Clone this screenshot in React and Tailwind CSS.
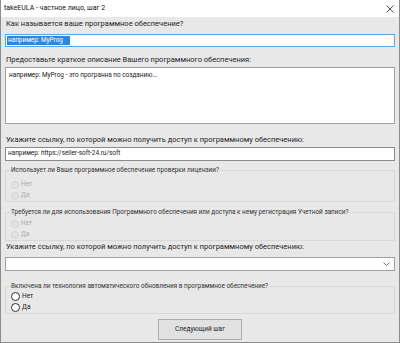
import React from "react";

const F = { fontFamily: 'Roboto, "Liberation Sans", Arial, sans-serif' };

function Radio({ label, disabled }) {
  return (
    <div className="flex items-center h-[11px] gap-[2px] leading-[11px]">
      <span
        className={
          disabled
            ? "w-[8px] h-[8px] rounded-full bg-[#e2e2e2] border border-[#d4d4d4]"
            : "w-[9px] h-[9px] rounded-full bg-white border border-[#333]"
        }
      />
      <span className={disabled ? "text-[6.5px] text-[#a8a8a8]" : "text-[6.5px] text-[#222]"}>{label}</span>
    </div>
  );
}

function Group({ legend, disabled, className }) {
  return (
    <fieldset className={"border border-[#d8d8d8] mx-[4px] px-[5px] " + className}>
      <legend className="text-[6.4px] text-[#333] leading-[10px] px-0">{legend}</legend>
      <div className="flex flex-col">
        <Radio label="Нет" disabled={disabled} />
        <Radio label="Да" disabled={disabled} />
      </div>
    </fieldset>
  );
}

export default function App() {
  return (
    <div style={F} className="w-[400px] h-[343px] bg-[#e8e8e8] border-x border-b border-[#8c8c8c] flex flex-col text-[#1e1e1e]">
      <div className="h-[17px] shrink-0 bg-white flex items-center justify-between pl-[3px] pr-[5px]">
        <span className="text-[7px] text-[#111]">takeEULA - частное лицо, шаг 2</span>
        <svg width="8" height="8" viewBox="0 0 8 8" className="mt-[1px]">
          <path d="M0.5 0.5 L7.5 7.5 M7.5 0.5 L0.5 7.5" stroke="#555" strokeWidth="1" />
        </svg>
      </div>

      <div className="mt-[1px] px-[5px] h-[12px] shrink-0 leading-[12px] text-[7.5px]">Как называется ваше программное обеспечение?</div>
      <div className="mt-[4px] mx-[4px] h-[13px] shrink-0 bg-white border border-[#56a6e8] flex items-center px-[1px]">
        <span className="bg-[#2f86dd] text-white text-[6.4px] leading-[9px] pl-[1px] pr-[7px]">например: MyProg</span>
      </div>

      <div className="mt-[7px] px-[5px] h-[12px] shrink-0 leading-[12px] text-[7.5px]">Предоставьте краткое описание Вашего программного обеспечения:</div>
      <div className="mt-[1px] mx-[4px] h-[57px] shrink-0 bg-white border border-[#a0a0a0] px-[3px] pt-[2px] text-[6.4px] leading-[10px] text-[#222]">
        например: MyProg - это програнна по созданию...
      </div>

      <div className="mt-[10px] px-[5px] h-[12px] shrink-0 leading-[12px] text-[7.5px]">Укажите ссылку, по которой можно получить доступ к программному обеспечению:</div>
      <div className="mt-[1px] mx-[4px] h-[14px] shrink-0 bg-white border border-[#8a8a8a] flex items-center px-[2px]">
        <span className="text-[6.4px] text-[#222]">например: https://seller-soft-24.ru/soft</span>
      </div>

      <Group legend="Использует ли Ваше программное обеспечение проверки лицензии?" disabled className="mt-[4px] pt-[4px] shrink-0" />
      <Group legend="Требуется ли для использования Программного обеспечения или доступа к нему регистрация Учетной записи?" disabled className="mt-[5px] pt-[1px] shrink-0" />

      <div className="mt-0 px-[5px] h-[12px] shrink-0 leading-[12px] text-[7.5px]">Укажите ссылку, по которой можно получить доступ к программному обеспечению:</div>
      <div className="mt-[4px] mx-[4px] h-[14px] shrink-0 bg-white border border-[#a0a0a0] flex items-center justify-end pr-[4px]">
        <svg width="7" height="4" viewBox="0 0 7 4">
          <path d="M0.5 0.5 L3.5 3.5 L6.5 0.5" stroke="#666" strokeWidth="0.9" fill="none" />
        </svg>
      </div>

      <Group legend="Включена ли технология автоматического обновления в программное обеспечение?" className="mt-[10px] shrink-0" />

      <div className="mt-[5px] flex justify-center shrink-0">
        <button className="w-[84px] h-[21px] bg-[#e1e1e1] border border-[#adadad] text-[6.5px] text-[#222]">Следующий шаг</button>
      </div>
    </div>
  );
}
